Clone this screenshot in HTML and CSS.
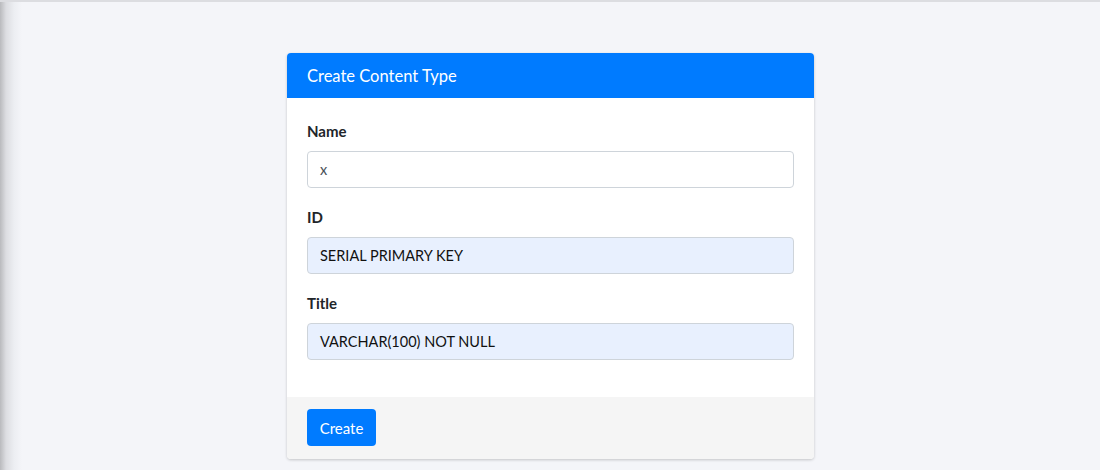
FILE: index.html
```html
<!DOCTYPE html>
<html>
<head>
<meta charset="utf-8">
<link rel="stylesheet" href="styles.css">
</head>
<body>
<div class="page">
  <div class="card">
    <div class="card-header">Create Content Type</div>
    <div class="card-body">
      <div class="group">
        <label class="label">Name</label>
        <div class="input">x</div>
      </div>
      <div class="group">
        <label class="label">ID</label>
        <div class="input filled">SERIAL PRIMARY KEY</div>
      </div>
      <div class="group">
        <label class="label">Title</label>
        <div class="input filled">VARCHAR(100) NOT NULL</div>
      </div>
    </div>
    <div class="card-footer">
      <button class="btn">Create</button>
    </div>
  </div>
</div>
</body>
</html>
```

FILE: styles.css
```css
html, body {
  margin: 0;
  padding: 0;
  height: 100%;
}
body {
  font-family: "Lato", "Noto Sans", sans-serif;
  color: #212529;
  background: linear-gradient(to right, #b9babd 0px, #dcdde1 6px, #eceef2 14px, #f4f5f9 22px), #f4f5f9;
  background-color: #f4f5f9;
}
.page {
  border-top: 2px solid #dcdde1;
  display: flex;
  justify-content: center;
  align-items: flex-start;
  padding-top: 51px;
  padding-left: 1px;
  height: 100%;
  box-sizing: border-box;
}
.card {
  width: 527px;
  height: 406px;
  background: #fff;
  border-radius: 4px;
  box-shadow: 0 1px 3px rgba(0,0,0,0.2);
  overflow: hidden;
  display: flex;
  flex-direction: column;
}
.card-header {
  background: #007bff;
  color: #fff;
  height: 45px;
  flex: none;
  box-sizing: border-box;
  padding: 0 20px;
  display: flex;
  align-items: center;
  font-size: 16.5px;
}
.card-body {
  padding: 20px 20px 19px;
  flex: 1;
}
.group {
  margin-bottom: 16px;
}
.label {
  display: block;
  font-weight: 700;
  font-size: 15px;
  line-height: 27px;
  margin-bottom: 6px;
}
.input {
  height: 37px;
  box-sizing: border-box;
  border: 1px solid #ced4da;
  border-radius: 4px;
  padding: 0 12px;
  display: flex;
  align-items: center;
  font-size: 14.5px;
  color: #495057;
  background: #fff;
}
.input.filled {
  background: #e8f0fe;
  color: #111;
}
.card-footer {
  background: #f5f5f5;
  height: 62px;
  flex: none;
  box-sizing: border-box;
  padding: 12px 20px;
}
.btn {
  height: 37px;
  width: 69px;
  border: none;
  border-radius: 4px;
  background: #007bff;
  color: #fff;
  font-family: inherit;
  font-size: 15px;
  padding: 0;
}
```
